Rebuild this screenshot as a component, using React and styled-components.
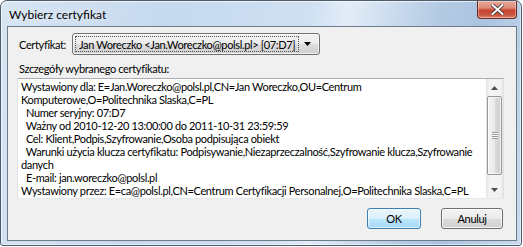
import React from "react";
import styled, { createGlobalStyle } from "styled-components";

const Global = createGlobalStyle`
  html, body { margin: 0; padding: 0; background: #ffffff; }
  body { font-family: Lato, "Noto Sans", sans-serif; font-size: 11px; color: #000; }
  * { box-sizing: border-box; }
`;

const Window = styled.div`
  width: 522px;
  height: 246px;
  border: 1px solid #4d5b6b;
  border-radius: 7px 7px 3px 3px;
  background: linear-gradient(100deg, #d7e5f3 0%, #c6d9ee 30%, #cfe0f2 55%, #e2ecf7 62%, #b4cbe4 78%, #aac3df 86%, #c9dbee 100%);
  display: flex;
  flex-direction: column;
  padding: 0 4px 4px 6px;
  box-shadow: inset 1px 1px 0 rgba(255,255,255,0.7), inset -1px -1px 0 rgba(255,255,255,0.5);
`;

const TitleBar = styled.div`
  height: 25px;
  display: flex;
  align-items: flex-start;
  justify-content: space-between;
`;

const Title = styled.div`
  padding: 6px 0 0 2px;
  font-size: 12px;
  color: #000;
  text-shadow: 0 0 6px rgba(255,255,255,0.9);
`;

const CloseButton = styled.div`
  width: 40px;
  height: 18px;
  border: 1px solid #6b2a22;
  border-top: none;
  border-radius: 0 0 4px 4px;
  background: linear-gradient(180deg, #e9a99a 0%, #dc8a77 40%, #c7432f 55%, #cc5a45 85%, #e08c73 100%);
  box-shadow: inset 0 0 0 1px rgba(255,255,255,0.35);
  display: flex;
  align-items: center;
  justify-content: center;
`;

const Client = styled.div`
  flex: 1;
  border: 1px solid #6e7c89;
  background: #f0f0f0;
  display: flex;
  flex-direction: column;
  padding: 6px 12px 0 9px;
  font-size: 11px;
  letter-spacing: -0.35px;
`;

const Row = styled.div`
  display: flex;
  align-items: center;
  height: 22px;
`;

const Label = styled.div`
  padding-left: ${p => p.$indent || 2}px;
  width: ${p => p.$width ? p.$width + "px" : "auto"};
  flex-shrink: 0;
`;

const Combo = styled.div`
  width: 248px;
  height: 22px;
  border: 1px solid #707070;
  border-radius: 3px;
  background: linear-gradient(180deg, #f2f2f2 0%, #ebebeb 50%, #dddddd 51%, #cfcfcf 100%);
  box-shadow: inset 0 0 0 1px rgba(255,255,255,0.7);
  display: flex;
  align-items: center;
  padding: 2px 3px 2px 2px;
`;

const ComboValue = styled.div`
  flex: 1;
  height: 16px;
  border: 1px dotted #555;
  display: flex;
  align-items: center;
  padding-left: 3px;
  white-space: nowrap;
  overflow: hidden;
`;

const ComboArrow = styled.div`
  width: 17px;
  display: flex;
  justify-content: center;
  align-items: center;
`;

const SectionLabel = styled(Label)`
  margin-top: 6px;
  height: 15px;
  line-height: 15px;
`;

const TextBox = styled.div`
  margin-top: 2px;
  height: 121px;
  border: 1px solid #abadb3;
  border-color: #abadb3 #dbdfe6 #e3e9ef #e2e3ea;
  background: #fff;
  display: flex;
`;

const TextArea = styled.div`
  flex: 1;
  overflow: hidden;
  padding: 1px 0 0 3px;
  line-height: 13px;
`;

const Line = styled.div`
  white-space: pre;
`;

const ScrollBar = styled.div`
  width: 17px;
  display: flex;
  flex-direction: column;
  background: linear-gradient(90deg, #e3e3e3 0%, #f3f3f3 20%, #f3f3f3 80%, #e8e8e8 100%);
`;

const ScrollBtn = styled.div`
  height: 17px;
  display: flex;
  align-items: center;
  justify-content: center;
`;

const ScrollTrack = styled.div`
  flex: 1;
  display: flex;
  flex-direction: column;
  padding: 0 1px;
`;

const Thumb = styled.div`
  height: ${p => p.$h}px;
  border: 1px solid #979797;
  border-radius: 2px;
  background: linear-gradient(90deg, #f2f2f2 0%, #e9e9e9 50%, #dadada 51%, #d0d0d0 100%);
  box-shadow: inset 0 0 0 1px rgba(255,255,255,0.7);
  display: flex;
  align-items: center;
  justify-content: center;
`;

const Grip = styled.div`
  width: 6px;
  height: 7px;
  background: repeating-linear-gradient(180deg, #9a9a9a 0px, #9a9a9a 1px, #f8f8f8 1px, #f8f8f8 2px);
`;

const Footer = styled.div`
  display: flex;
  justify-content: flex-end;
  gap: 20px;
  margin-top: 9px;
  padding-right: 1px;
`;

const Button = styled.div`
  width: ${p => p.$w}px;
  height: 21px;
  border: 1px solid ${p => (p.$default ? "#3c7fb1" : "#707070")};
  border-radius: 3px;
  background: ${p =>
    p.$default
      ? "linear-gradient(180deg, #eaf6fd 0%, #d9f0fc 50%, #bee6fd 51%, #a7d9f5 100%)"
      : "linear-gradient(180deg, #f2f2f2 0%, #ebebeb 50%, #dddddd 51%, #cfcfcf 100%)"};
  box-shadow: inset 0 0 0 1px ${p => (p.$default ? "rgba(255,255,255,0.6)" : "rgba(255,255,255,0.8)")};
  display: flex;
  align-items: center;
  justify-content: center;
`;

const lines = [
  "Wystawiony dla: E=Jan.Woreczko@polsl.pl,CN=Jan Woreczko,OU=Centrum",
  "Komputerowe,O=Politechnika Slaska,C=PL",
  "  Numer seryjny: 07:D7",
  "  Ważny od 2010-12-20 13:00:00 do 2011-10-31 23:59:59",
  "  Cel: Klient,Podpis,Szyfrowanie,Osoba podpisująca obiekt",
  "  Warunki użycia klucza certyfikatu: Podpisywanie,Niezaprzeczalność,Szyfrowanie klucza,Szyfrowanie",
  "danych",
  "  E-mail: jan.woreczko@polsl.pl",
  "Wystawiony przez: E=ca@polsl.pl,CN=Centrum Certyfikacji Personalnej,O=Politechnika Slaska,C=PL",
  "  Numer seryjny certyfikatu wystawcy: 01",
];

const Arrow = ({ up }) => (
  <svg width="7" height="4" viewBox="0 0 7 4">
    <path d={up ? "M0 4 L3.5 0 L7 4 Z" : "M0 0 L7 0 L3.5 4 Z"} fill="#4d4d4d" />
  </svg>
);

export default function App() {
  return (
    <>
      <Global />
      <Window>
        <TitleBar>
          <Title>Wybierz certyfikat</Title>
          <CloseButton>
            <svg width="13" height="11" viewBox="0 0 13 11">
              <path d="M1.5 1 L11.5 10 M11.5 1 L1.5 10" stroke="#3a2a2a" strokeWidth="3.6" strokeLinecap="square" />
              <path d="M1.5 1 L11.5 10 M11.5 1 L1.5 10" stroke="#ffffff" strokeWidth="2" strokeLinecap="square" />
            </svg>
          </CloseButton>
        </TitleBar>
        <Client>
          <Row>
            <Label $width={55}>Certyfikat:</Label>
            <Combo>
              <ComboValue>Jan Woreczko &lt;Jan.Woreczko@polsl.pl&gt; [07:D7]</ComboValue>
              <ComboArrow>
                <svg width="7" height="4" viewBox="0 0 7 4"><path d="M0 0 L7 0 L3.5 4 Z" fill="#000" /></svg>
              </ComboArrow>
            </Combo>
          </Row>
          <SectionLabel>Szczegóły wybranego certyfikatu:</SectionLabel>
          <TextBox>
            <TextArea>
              {lines.map((l, i) => (
                <Line key={i}>{l}</Line>
              ))}
            </TextArea>
            <ScrollBar>
              <ScrollBtn><Arrow up /></ScrollBtn>
              <ScrollTrack>
                <Thumb $h={79}><Grip /></Thumb>
              </ScrollTrack>
              <ScrollBtn><Arrow /></ScrollBtn>
            </ScrollBar>
          </TextBox>
          <Footer>
            <Button $w={54} $default>OK</Button>
            <Button $w={62}>Anuluj</Button>
          </Footer>
        </Client>
      </Window>
    </>
  );
}
